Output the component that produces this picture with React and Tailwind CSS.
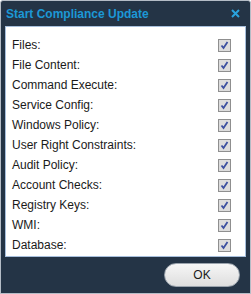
import React from 'react';

const items = [
  'Files:',
  'File Content:',
  'Command Execute:',
  'Service Config:',
  'Windows Policy:',
  'User Right Constraints:',
  'Audit Policy:',
  'Account Checks:',
  'Registry Keys:',
  'WMI:',
  'Database:',
];

const Check = () => (
  <span className="flex h-[13px] w-[13px] items-center justify-center border border-[#8f8f8f] bg-[#dcdcdc]">
    <svg width="9" height="9" viewBox="0 0 9 9">
      <path d="M1.5 4.5 L3.5 7 L7.5 1" fill="none" stroke="#3b4fa0" strokeWidth="1.8" />
    </svg>
  </span>
);

export default function App() {
  return (
    <div className="h-[294px] w-[251px] bg-white font-['Liberation_Sans',sans-serif]">
      <div className="flex h-full w-full flex-col rounded-t-[3px] border border-[#b4bcc6] bg-[#243446]">
        <div className="flex h-[25px] items-center justify-between pl-[5px] pr-[10px]">
          <span className="text-[12px] font-bold text-[#1c98d6]">Start Compliance Update</span>
          <svg width="9" height="9" viewBox="0 0 9 9">
            <path d="M1 1 L8 8 M8 1 L1 8" stroke="#2aa3dd" strokeWidth="2" />
          </svg>
        </div>
        <div className="mx-[4px] flex flex-col border border-[#a7bfdc] bg-white pb-[1px] pl-[6px] pr-[14px] pt-[8px]">
          {items.map((label) => (
            <div key={label} className="flex h-[20px] items-center justify-between">
              <span className="text-[12px] text-[#1a1a1a]">{label}</span>
              <Check />
            </div>
          ))}
        </div>
        <div className="flex flex-1 items-center justify-end pr-[10px]">
          <button className="h-[24px] w-[76px] rounded-full border border-[#9aa3ad] bg-gradient-to-b from-[#f6f6f6] to-[#dedede] text-[12px] text-[#1a1a1a]">
            OK
          </button>
        </div>
      </div>
    </div>
  );
}
